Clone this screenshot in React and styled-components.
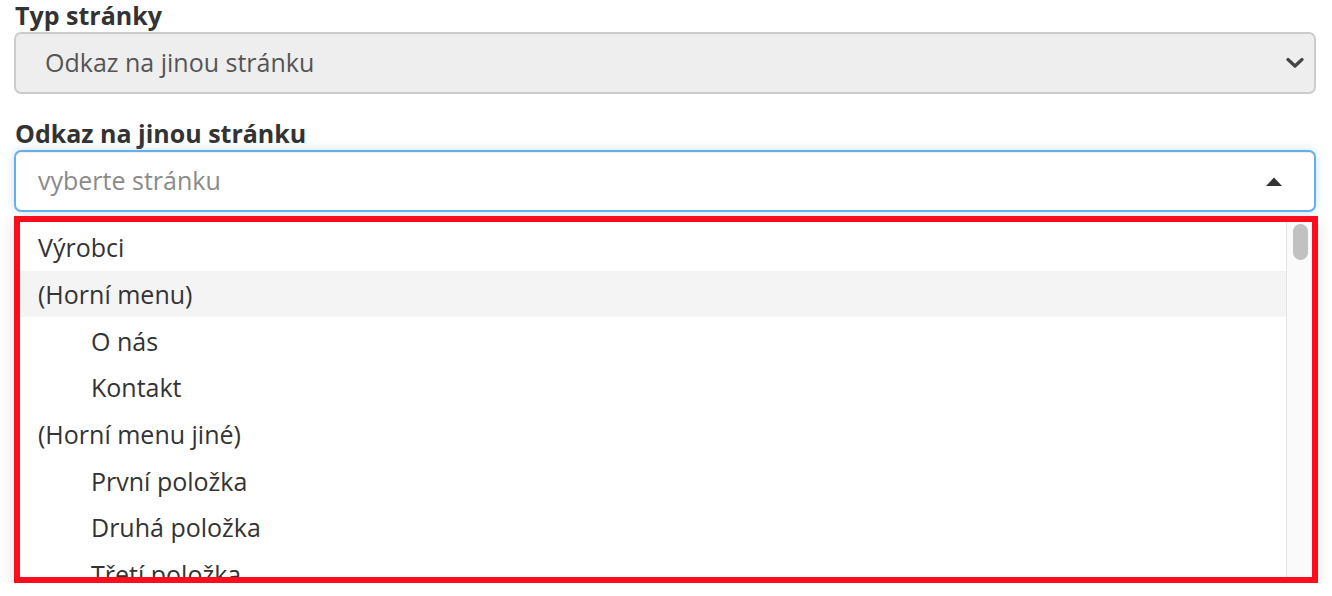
import React from 'react';
import styled, { createGlobalStyle } from 'styled-components';

const GlobalStyle = createGlobalStyle`
  html, body {
    margin: 0;
    padding: 0;
    background: #fff;
    font-family: "Open Sans", "Liberation Sans", sans-serif;
    color: #333;
  }
`;

const Page = styled.div`
  padding: 0 16px 0 14px;
  width: 1332px;
  box-sizing: border-box;
`;

const Group = styled.div`
  display: flex;
  flex-direction: column;
  margin-top: ${(p) => p.$top || 0}px;
`;

const Label = styled.label`
  font-size: 25px;
  font-weight: 700;
  line-height: 30px;
  color: #333;
  padding-left: 1px;
  margin-bottom: 2px;
`;

const SelectBox = styled.div`
  height: 62px;
  box-sizing: border-box;
  display: flex;
  align-items: center;
  justify-content: space-between;
  border-radius: 7px;
  font-size: 25px;
  padding: ${(p) => (p.$open ? '0 32px 0 22px' : '0 10px 0 29px')};
  background: ${(p) => (p.$open ? '#fff' : '#eee')};
  border: 2px solid ${(p) => (p.$open ? '#66afe9' : '#ccc')};
  color: ${(p) => (p.$open ? '#8a8a8a' : '#555')};
  box-shadow: ${(p) =>
    p.$open
      ? 'inset 0 1px 1px rgba(0,0,0,.075), 0 0 10px rgba(102,175,233,.35)'
      : 'none'};

  span {
    margin-top: -2px;
  }
`;

const Dropdown = styled.div`
  margin-top: 4px;
  margin-right: -2px;
  height: 367px;
  box-sizing: border-box;
  border: 6px solid #fc0d1d;
  display: flex;
  background: #fff;
  box-shadow: 0 6px 14px rgba(0, 0, 0, 0.12);
  overflow: hidden;
`;

const List = styled.ul`
  list-style: none;
  margin: 0;
  padding: 2px 0 0;
  flex: 1;
`;

const Item = styled.li`
  height: 46.67px;
  display: flex;
  align-items: center;
  font-size: 25px;
  color: #333;
  padding-left: ${(p) => (p.$nested ? 71 : 18)}px;
  background: ${(p) => (p.$active ? '#f4f4f4' : 'transparent')};
`;

const Track = styled.div`
  width: 26px;
  background: #fafafa;
  border-left: 1px solid #e3e3e3;
  padding: 2px 0 0 6px;
  box-sizing: border-box;
`;

const Thumb = styled.div`
  width: 15px;
  height: 36px;
  border-radius: 8px;
  background: #c1c1c1;
`;

const Chevron = () => (
  <svg width="18" height="12" viewBox="0 0 18 12">
    <path d="M2 2.5 L9 9 L16 2.5" fill="none" stroke="#444" strokeWidth="3.2" strokeLinecap="round" strokeLinejoin="round" />
  </svg>
);

const Caret = () => (
  <svg width="16" height="9" viewBox="0 0 16 9">
    <path d="M0 9 L8 0.5 L16 9 Z" fill="#333" />
  </svg>
);

const items = [
  { text: 'Výrobci' },
  { text: '(Horní menu)', active: true },
  { text: 'O nás', nested: true },
  { text: 'Kontakt', nested: true },
  { text: '(Horní menu jiné)' },
  { text: 'První položka', nested: true },
  { text: 'Druhá položka', nested: true },
  { text: 'Třetí položka', nested: true },
];

export default function App() {
  return (
    <Page>
      <GlobalStyle />
      <Group>
        <Label>Typ stránky</Label>
        <SelectBox>
          <span>Odkaz na jinou stránku</span>
          <Chevron />
        </SelectBox>
      </Group>
      <Group $top={24}>
        <Label>Odkaz na jinou stránku</Label>
        <SelectBox $open>
          <span>vyberte stránku</span>
          <Caret />
        </SelectBox>
        <Dropdown>
          <List>
            {items.map((it) => (
              <Item key={it.text} $nested={it.nested} $active={it.active}>
                {it.text}
              </Item>
            ))}
          </List>
          <Track>
            <Thumb />
          </Track>
        </Dropdown>
      </Group>
    </Page>
  );
}
